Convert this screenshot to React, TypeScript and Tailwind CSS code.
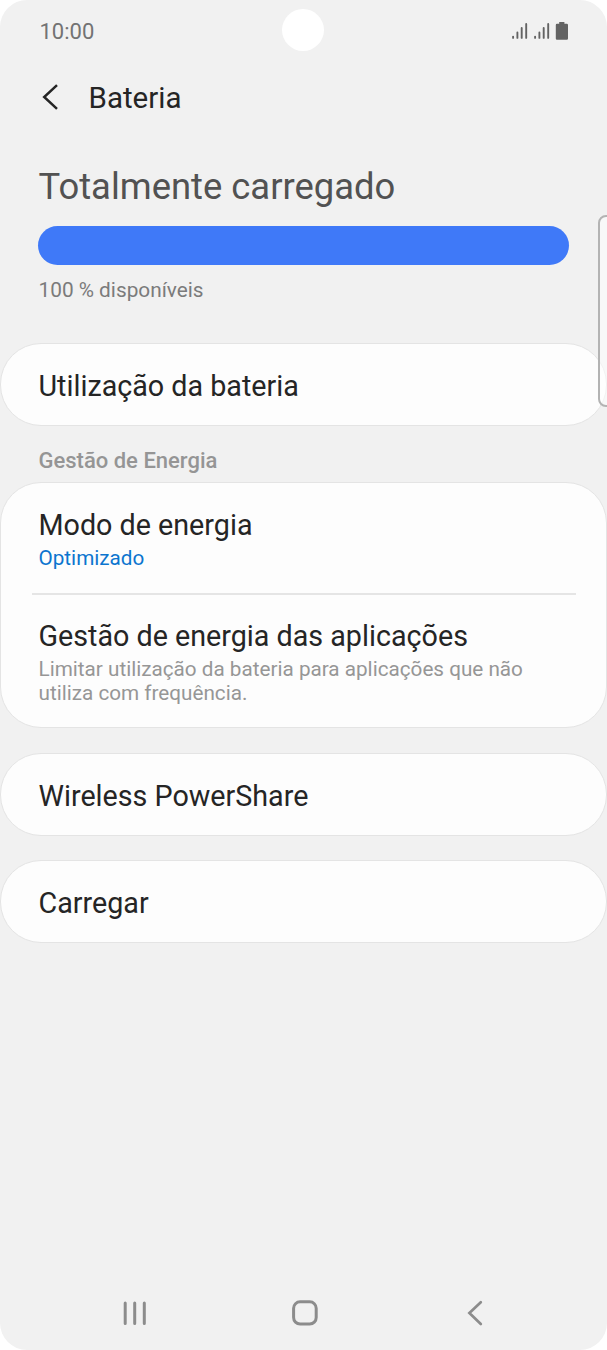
import React from 'react';

const SignalIcon: React.FC = () => (
  <svg width="16" height="18" viewBox="0 0 16 18" fill="none" stroke="#636363" strokeWidth="1.9" strokeLinecap="round">
    <path d="M1.1 14.6v1.3M5.4 10.4v5.5M9.7 6v9.9M14.2 2v13.9" />
  </svg>
);

const StatusBar: React.FC = () => (
  <div className="relative flex h-16 items-center justify-between pl-[39.5px] pr-[38px]">
    <span className="text-[22px] leading-7 text-[#737373]">10:00</span>
    {/* Camera hole */}
    <div className="absolute left-[282px] top-[9px] h-[42px] w-[42px] rounded-full bg-white"></div>
    <div className="flex items-center gap-[5.5px] pb-[3px]">
      <SignalIcon />
      <SignalIcon />
      <svg width="14" height="18" viewBox="0 0 14 18" fill="#636363">
        <path d="M4.2 0h5.2v1.8h2.4q1.2 0 1.2 1.2v13.6q0 1.2-1.2 1.2H2q-1.2 0-1.2-1.2V3q0-1.2 1.2-1.2h2.2z" />
      </svg>
    </div>
  </div>
);

interface CardProps {
  className?: string;
  children: React.ReactNode;
}

const Card: React.FC<CardProps> = ({ className = '', children }) => (
  <div className={`rounded-[41px] border border-[#e4e4e4] bg-[#fdfdfd] px-[37.5px] ${className}`}>
    {children}
  </div>
);

const RowTitle: React.FC<{ children: React.ReactNode }> = ({ children }) => (
  <h3 className="whitespace-nowrap text-[28.7px] leading-9 text-[#252525]">{children}</h3>
);

export default function App() {
  return (
    <div className="relative flex h-[1350px] w-[607px] flex-col overflow-hidden rounded-[27px] bg-[#f1f1f1] font-[Roboto,sans-serif]">
      <StatusBar />

      <header className="flex h-[68px] items-center pl-[42px]">
        <svg width="17" height="26" viewBox="0 0 17 26" fill="none" stroke="#252525" strokeWidth="2.5" className="mb-[3px]">
          <path d="M15 1.2 2.2 13 15 24.8" />
        </svg>
        <h1 className="ml-[29.5px] text-[29.5px] leading-9 text-[#252525]">Bateria</h1>
      </header>

      <section className="mt-[30px] px-[38px]">
        <h2 className="pl-[0.5px] pt-[1px] text-[36.4px] leading-[47px] text-[#525252]">Totalmente carregado</h2>
        <div className="mt-4 h-[38.5px] w-[531px] rounded-full bg-[#3f79f8]"></div>
        <p className="mt-[11.5px] pl-[0.5px] text-[20.8px] leading-7 text-[#7b7b7b]">100 % disponíveis</p>
      </section>

      <Card className="mt-[39px] flex h-[83px] items-center pt-[2px]">
        <RowTitle>Utilização da bateria</RowTitle>
      </Card>

      <div className="flex h-[56px] items-center px-[38.5px] pt-[13px]">
        <span className="text-[22px] font-medium leading-7 text-[#959595]">Gestão de Energia</span>
      </div>

      <Card className="h-[246px] pt-[23.5px]">
        <RowTitle>Modo de energia</RowTitle>
        <p className="mt-[1px] text-[20.7px] leading-7 text-[#0c75cf]">Optimizado</p>
        <div className="-mx-[7px] mt-[21.5px] h-[2px] bg-[#e5e5e5]"></div>
        <div className="mt-[23px]">
          <RowTitle>Gestão de energia das aplicações</RowTitle>
          <p className="mt-[3px] text-[20.7px] leading-6 text-[#969696]">
            Limitar utilização da bateria para aplicações que não<br />utiliza com frequência.
          </p>
        </div>
      </Card>

      <Card className="mt-[25px] flex h-[83px] items-center pt-[3px]">
        <RowTitle>Wireless PowerShare</RowTitle>
      </Card>

      <Card className="mt-[24px] flex h-[83px] items-center pt-[3px]">
        <RowTitle>Carregar</RowTitle>
      </Card>

      {/* Navigation bar */}
      <nav className="mt-auto flex h-[74px] items-center justify-between pl-[122px] pr-[123px]">
        <svg width="26" height="26" viewBox="0 0 26 26" fill="none" stroke="#8c8c8c" strokeWidth="3" strokeLinecap="round">
          <path d="M3.2 3v20.5M12.7 3v20.5M22.3 3v20.5" />
        </svg>
        <svg width="28" height="28" viewBox="0 0 28 28" fill="none" stroke="#8c8c8c" strokeWidth="3" className="mr-[5px]">
          <rect x="2.6" y="2.8" width="22.6" height="22.2" rx="6.5" />
        </svg>
        <svg width="18" height="26" viewBox="0 0 18 26" fill="none" stroke="#8c8c8c" strokeWidth="2.7" strokeLinecap="round">
          <path d="M14.8 2.2 3.4 13l11.4 11" />
        </svg>
      </nav>

      {/* Edge panel handle */}
      <div className="absolute -right-[10px] top-[215px] h-[192px] w-[19px] rounded-[8px] border-2 border-[#b3b3b3] bg-white/50"></div>
    </div>
  );
}
